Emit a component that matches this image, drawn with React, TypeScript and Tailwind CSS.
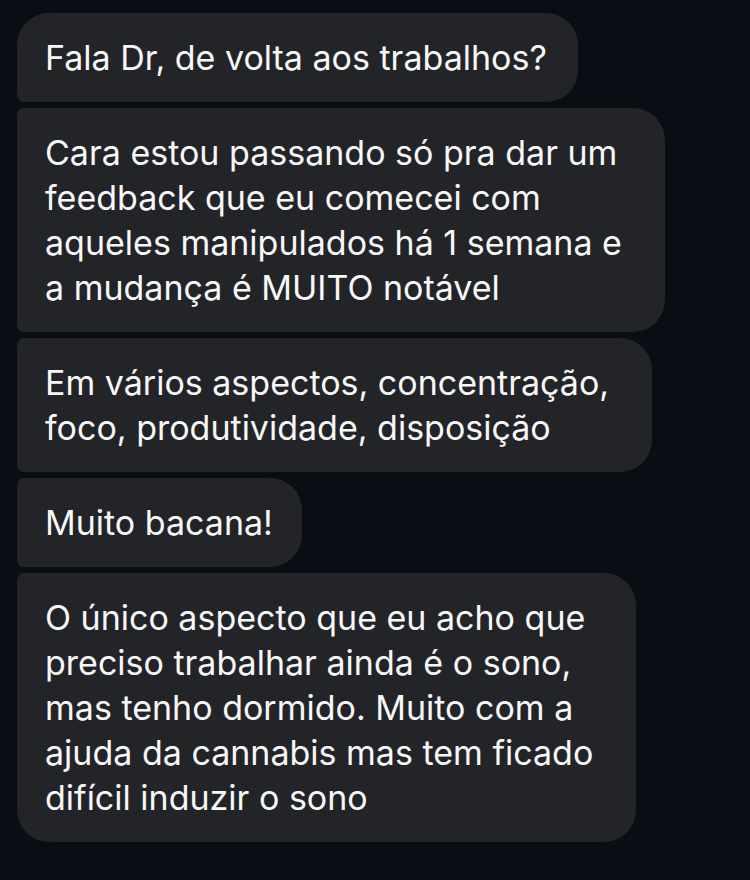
const messages = [
  { lines: ["Fala Dr, de volta aos trabalhos?"], w: "w-[561px]" },
  {
    lines: [
      "Cara estou passando só pra dar um",
      "feedback que eu comecei com",
      "aqueles manipulados há 1 semana e",
      "a mudança é MUITO notável",
    ],
    w: "w-[648px]",
  },
  {
    lines: ["Em vários aspectos, concentração,", "foco, produtividade, disposição"],
    w: "w-[635px]",
  },
  { lines: ["Muito bacana!"], w: "w-[285px]" },
  {
    lines: [
      "O único aspecto que eu acho que",
      "preciso trabalhar ainda é o sono,",
      "mas tenho dormido. Muito com a",
      "ajuda da cannabis mas tem ficado",
      "difícil induzir o sono",
    ],
    w: "w-[619px]",
  },
];

export default function App() {
  return (
    <div className="min-h-[880px] w-[750px] bg-[#0b0d14] pt-[13px] pl-[17px] font-['Inter','Liberation_Sans',sans-serif]">
      <div className="flex flex-col gap-[6px]">
        {messages.map((m, i) => {
          const first = i === 0;
          const last = i === messages.length - 1;
          return (
            <div
              key={i}
              className={`${m.w} bg-[#232428] px-[28px] py-[22px] text-[34px] leading-[45px] text-[#f7f7f8] rounded-r-[32px] ${
                first ? "rounded-tl-[32px]" : "rounded-tl-[7px]"
              } ${last ? "rounded-bl-[32px]" : "rounded-bl-[7px]"}`}
            >
              {m.lines.map((l, j) => (
                <div key={j} className="whitespace-nowrap">
                  {l}
                </div>
              ))}
            </div>
          );
        })}
      </div>
    </div>
  );
}
